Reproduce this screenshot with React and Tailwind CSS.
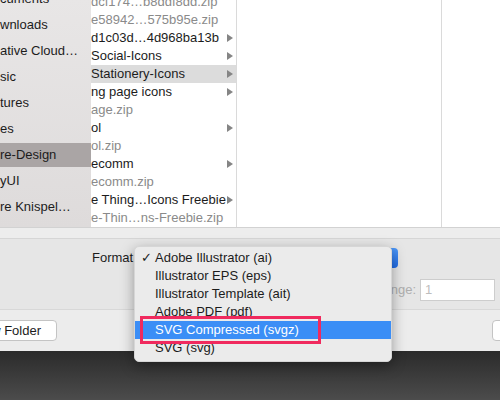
import React from 'react'

const sidebar = [
  { label: 'cuments' },
  { label: 'wnloads' },
  { label: 'ative Cloud…' },
  { label: 'sic' },
  { label: 'tures' },
  { label: 'es' },
  { label: 're-Design', selected: true },
  { label: 'yUI' },
  { label: 're Knispel…' },
]

const files = [
  { name: 'dcf174…b8ddf8dd.zip', zip: true },
  { name: 'e58942…575b95e.zip', zip: true },
  { name: 'd1c03d…4d968ba13b' },
  { name: 'Social-Icons' },
  { name: 'Stationery-Icons', selected: true },
  { name: 'ng page icons' },
  { name: 'age.zip', zip: true },
  { name: 'ol' },
  { name: 'ol.zip', zip: true },
  { name: 'ecomm' },
  { name: 'ecomm.zip', zip: true },
  { name: 'e Thing…Icons Freebie' },
  { name: 'e-Thin…ns-Freebie.zip', zip: true },
]

const formats = [
  { label: 'Adobe Illustrator (ai)', checked: true },
  { label: 'Illustrator EPS (eps)' },
  { label: 'Illustrator Template (ait)' },
  { label: 'Adobe PDF (pdf)' },
  { label: 'SVG Compressed (svgz)', active: true },
  { label: 'SVG (svg)' },
]

function Arrow() {
  return (
    <svg width="6" height="8" viewBox="0 0 6 8" className="shrink-0">
      <path d="M0 0 L6 4 L0 8 Z" fill="#858585" />
    </svg>
  )
}

export default function App() {
  return (
    <div
      className="relative w-[500px] h-[400px] overflow-hidden flex flex-col text-[13px] text-[#1c1c1c]"
      style={{ fontFamily: '"Liberation Sans", Arial, sans-serif' }}
    >
      {/* browser columns */}
      <div className="h-[227px] flex shrink-0">
        <div className="w-[91px] overflow-hidden bg-gradient-to-b from-[#e8e6e6] to-[#dedbdb]">
          <div className="-mt-[14px]">
            {sidebar.map((s) => (
              <div key={s.label} className="h-[26px] flex items-center">
                <div
                  className={`h-[24px] w-full flex items-center whitespace-nowrap ${s.selected ? 'bg-[#aaa5a5]' : ''}`}
                >
                  {s.label}
                </div>
              </div>
            ))}
          </div>
        </div>
        <div className="w-[146px] bg-white border-r border-[#dadada] overflow-hidden">
          <div className="-mt-[7px]">
            {files.map((f) => (
              <div
                key={f.name}
                className={`h-[18px] flex items-center justify-between pr-[3px] whitespace-nowrap ${f.selected ? 'bg-[#dcdcdc]' : ''}`}
              >
                <span className={f.zip ? 'text-[#8a8a8a]' : 'text-[#1c1c1c]'}>{f.name}</span>
                {!f.zip && <Arrow />}
              </div>
            ))}
          </div>
        </div>
        <div className="w-[205px] bg-white border-r border-[#dadada]" />
        <div className="flex-1 bg-white" />
      </div>

      <div className="h-[12px] shrink-0 bg-[#ededed] border-t border-[#d2d2d2] border-b border-b-[#d6d6d6]" />

      {/* options */}
      <div className="h-[71px] shrink-0 bg-[#e6e6e6] border-b border-[#d8d8d8] flex flex-col">
        <div className="mt-[9px] h-[20px] flex items-center pl-[92px]">
          <span>Format:</span>
          <div className="ml-[2px] w-[259px] h-[20px] rounded-[4px] bg-gradient-to-b from-[#4c97f8] to-[#1f6be6]" />
        </div>
        <div className="mt-[11px] h-[22px] flex items-center justify-end pr-[5px]">
          <span className="text-[#aeaeae] mr-[4px]">Range:</span>
          <div className="w-[75px] h-[22px] bg-white border border-[#cdcdcd] flex items-center pl-[4px] text-[#bdbdbd]">
            1
          </div>
        </div>
      </div>

      {/* buttons */}
      <div className="h-[41px] shrink-0 bg-[#ececec] flex items-start justify-between pt-[10px]">
        <div className="-ml-[41px] w-[98px] h-[21px] bg-white border border-[#c4c4c4] rounded-[4px] flex items-center justify-end pr-[15px] whitespace-nowrap">
          New Folder
        </div>
        <div className="w-[40px] h-[21px] -mr-[32px] bg-white border border-[#c4c4c4] rounded-[4px]" />
      </div>

      <div className="flex-1 bg-gradient-to-b from-[#2b2b2b] to-[#4c4c4c]" />

      {/* format popup menu */}
      <div className="absolute left-[134px] top-[246px] w-[258px] h-[116px] rounded-[5px] bg-[#ebebeb] shadow-[0_4px_14px_rgba(0,0,0,0.35)] border border-[#d6d6d6] pt-[2px]">
        {formats.map((f) => (
          <div
            key={f.label}
            className={`relative h-[18px] flex items-center pl-[20px] whitespace-nowrap ${f.active ? 'bg-[#3b8ef6] text-white' : 'text-[#1c1c1c]'}`}
          >
            {f.checked && <span className="absolute left-[6px]">✓</span>}
            {f.label}
          </div>
        ))}
      </div>

      {/* highlight box */}
      <div className="absolute left-[140px] top-[316px] w-[181px] h-[28px] border-[3px] border-[#f02a5e]" />
    </div>
  )
}
